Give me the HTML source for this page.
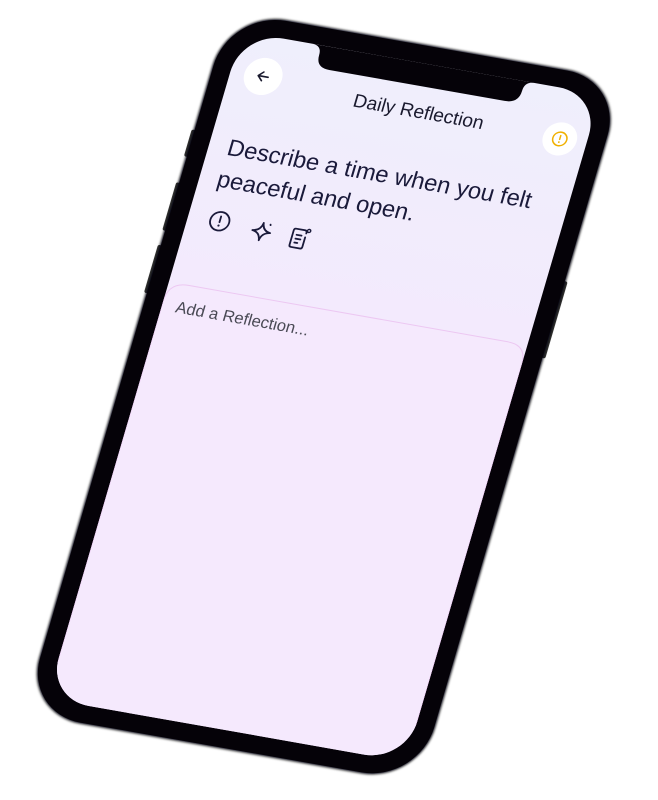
<!DOCTYPE html>
<html><head><meta charset="utf-8"><style>
html,body{margin:0;padding:0;background:#fff;width:658px;height:800px;overflow:hidden}
svg{display:block}
text{font-family:"Liberation Sans",sans-serif}
</style></head><body>
<svg width="658" height="800" viewBox="0 0 658 800" xmlns="http://www.w3.org/2000/svg">
<defs>
<linearGradient id="scr" x1="0" y1="0" x2="0" y2="1">
<stop offset="0" stop-color="#efeffc"/>
<stop offset="0.45" stop-color="#f4e9fd"/>
<stop offset="1" stop-color="#f1e4fb"/>
</linearGradient>
<clipPath id="sc"><rect x="19" y="19" width="364" height="695" rx="42"/></clipPath>
<filter id="soft"><feGaussianBlur stdDeviation="1.2"/></filter>
</defs>
<g transform="matrix(0.985,0.174,-0.281,0.960,228.8,9.8)">
  <!-- side buttons -->
  <rect x="-2" y="125" width="4" height="28" rx="2" fill="#333"/>
  <rect x="-2" y="180" width="4" height="50" rx="2" fill="#333"/>
  <rect x="-2" y="245" width="4" height="50" rx="2" fill="#333"/>
  <rect x="400" y="210" width="4" height="80" rx="2" fill="#333"/>
  <!-- frame -->
  <rect x="0" y="0" width="402" height="733" rx="58" fill="#050208" filter="url(#soft)"/>
  <rect x="1" y="1" width="400" height="731" rx="57" fill="#050208"/>
  <!-- screen -->
  <rect x="19" y="19" width="364" height="695" rx="42" fill="url(#scr)"/>
  <!-- card -->
  <g clip-path="url(#sc)">
    <path d="M19 740 L19 300 Q19 280 39 280 L363 280 Q383 280 383 300 L383 740" fill="#f5e9fd" stroke="#ecc8f2" stroke-width="1"/>
  </g>
  <!-- notch -->
  <path d="M90 19 Q100 19 100 29 Q100 42 114 42 L292 42 Q306 42 306 29 Q306 19 316 19 Z" fill="#050208"/>
  <!-- back button -->
  <circle cx="52" cy="60" r="19" fill="#fff"/>
  <path d="M57 60 H47 M51.5 55.5 L47 60 L51.5 64.5" fill="none" stroke="#1a1a2e" stroke-width="1.6" stroke-linecap="round" stroke-linejoin="round"/>
  <!-- title -->
  <text x="212" y="74" font-size="19" text-anchor="middle" fill="#1a1a2e">Daily Reflection</text>
  <!-- yellow button -->
  <circle cx="356" cy="70" r="17" fill="#fff"/>
  <circle cx="356" cy="70" r="7" fill="none" stroke="#f0b000" stroke-width="1.5"/>
  <path d="M356 66.5 V70.5" stroke="#f0b000" stroke-width="1.5" stroke-linecap="round"/>
  <circle cx="356" cy="73.3" r="0.9" fill="#f0b000"/>
  <!-- prompt -->
  <text x="38" y="144" font-size="23.5" fill="#1a1a3a">Describe a time when you felt</text>
  <text x="37" y="177" font-size="23.5" fill="#1a1a3a">peaceful and open.</text>
  <!-- icons -->
  <g fill="none" stroke="#1a1a3a" stroke-width="1.8" stroke-linecap="round" stroke-linejoin="round">
    <circle cx="51" cy="211" r="9.5"/>
    <path d="M51 206 V212"/>
    <path d="M94 205 Q95 213 103 214 Q95 215 94 223 Q93 215 85 214 Q93 213 94 205 Z"/>
    <path d="M101 205.5 L101.2 206" />
    <path d="M138 208 V207 Q138 205 136 205 H127 Q125 205 125 207 V222 Q125 224 127 224 H136 Q138 224 138 222 V212"/>
    <path d="M129 211 H134 M129 215 H134 M129 219 H132"/>
  </g>
  <circle cx="51" cy="215.5" r="1.1" fill="#1a1a3a"/>
  <circle cx="140" cy="205" r="1.6" fill="none" stroke="#1a1a3a" stroke-width="1.4"/>
  <text x="33" y="309" font-size="16.5" fill="#4a4a55">Add a Reflection...</text>
</g>
</svg>
</body></html>
